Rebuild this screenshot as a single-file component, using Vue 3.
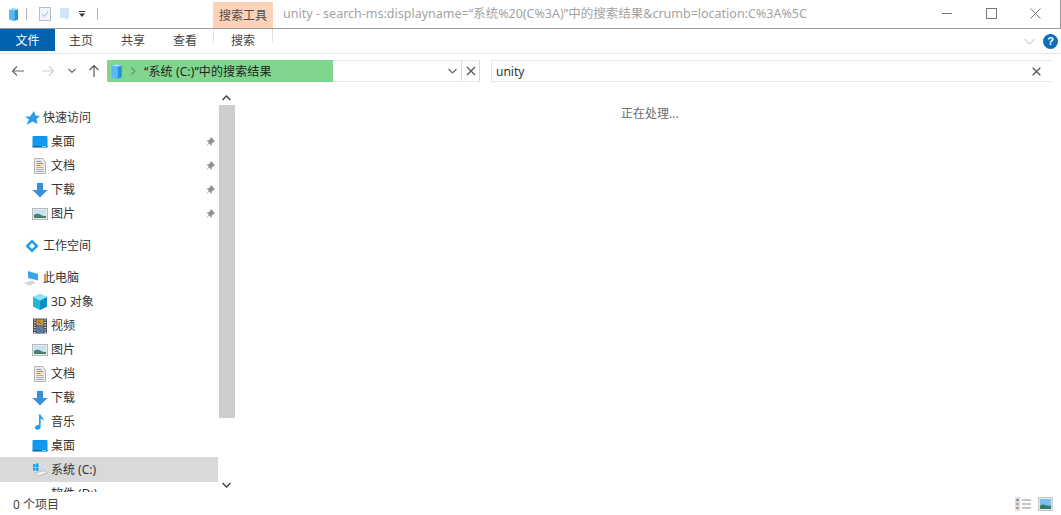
<script setup>
const quick = [
  { icon: 'desk', label: '桌面' },
  { icon: 'doc', label: '文档' },
  { icon: 'down', label: '下载' },
  { icon: 'pic', label: '图片' }
]
const pc = [
  { icon: 'cube3d', label: '3D 对象' },
  { icon: 'film', label: '视频' },
  { icon: 'pic', label: '图片' },
  { icon: 'doc', label: '文档' },
  { icon: 'down', label: '下载' },
  { icon: 'music', label: '音乐' },
  { icon: 'desk', label: '桌面' },
  { icon: 'drive', label: '系统 (C:)', selected: true },
  { icon: '', label: '软件 (D:)' }
]
const ribbonTabs = ['主页', '共享', '查看']
</script>

<template>
  <div class="window">
    <svg class="sprite" width="0" height="0">
      <defs>
        <symbol id="cube" viewBox="0 0 16 16">
          <path d="M2.500 2l5.500-2 5.500 2v12l-5.500 2-5.500-2z" fill="#56b8f4" />
          <path d="M9.500 2.500l4-.5v12l-4 1.600z" fill="#2a8fdb" />
          <path d="M2.500 2L8 0l5.500 2-4 .7z" fill="#a5dcfa" />
        </symbol>
        <symbol id="desk" viewBox="0 0 16 16">
          <rect x="0.500" y="2" width="15" height="11" rx="1" fill="#0f9af0" />
          <rect x="0.500" y="12" width="15" height="1.600" fill="#0a6fb5" />
          <rect x="10" y="12.200" width="4" height="1" fill="#b7e0f8" />
        </symbol>
        <symbol id="doc" viewBox="0 0 16 16">
          <path d="M2.500 .5h8l3 3v12h-11z" fill="#e9ebed" stroke="#b2b6b9" />
          <path d="M4.500 3.500h5M4.500 5.500h7M4.500 7.500h4" stroke="#4ea6e4" />
          <path d="M4.500 9.500h7M4.500 11.500h7M4.500 13.500h7" stroke="#a9adb0" />
        </symbol>
        <symbol id="down" viewBox="0 0 16 16">
          <path d="M5 1h6v7h4.500L8 15.500 .5 8H5z" fill="#3a8fdd" />
        </symbol>
        <symbol id="pic" viewBox="0 0 16 16">
          <rect x="0.500" y="2.500" width="15" height="11" fill="#e7e8e9" stroke="#b5b8ba" />
          <rect x="2" y="4" width="12" height="8" fill="#c5e3f6" />
          <path d="M2 9c3-2 5-1 7 0s3 1 5 1v2H2z" fill="#4a7f66" />
        </symbol>
        <symbol id="film" viewBox="0 0 16 16">
          <rect x="1" y="0.500" width="14" height="15" fill="#4d5258" />
          <path d="M2 2h1.500M2 4.500h1.500M2 7h1.500M2 9.500h1.500M2 12h1.500M2 14.500h1.500M12.500 2H14M12.500 4.500H14M12.500 7H14M12.500 9.500H14M12.500 12H14M12.500 14.500H14" stroke="#e8e8e8" />
          <rect x="4.500" y="1.500" width="7" height="6" fill="#c9913f" />
          <rect x="4.500" y="8.500" width="7" height="6" fill="#4f88c0" />
          <path d="M6 3l3 3M6 10l3 3" stroke="#8a3e2a" />
        </symbol>
        <symbol id="cube3d" viewBox="0 0 16 16">
          <path d="M8 0l7 3v9.500l-7 3.500-7-3.500V3z" fill="#25b7d8" />
          <path d="M8 6.500l7-3.500v9.500L8 16z" fill="#0d8fc5" />
          <path d="M1 3l7-3 7 3-7 3.500z" fill="#8ee4f2" />
        </symbol>
        <symbol id="music" viewBox="0 0 16 16">
          <path d="M7 0.500h1.600c.3 2.400 3.400 3.300 3.400 6.500-.8-1.500-2-2-3.400-2.300V12.800c0 1.700-1.400 3-3.300 3-1.300 0-2.300-.8-2.300-2 0-1.600 1.700-2.800 3.300-2.800.3 0 .5 0 .7.100z" fill="#15a1ee" />
        </symbol>
        <symbol id="pin" viewBox="0 0 10 10">
          <path d="M6 0l4 4-1.200.7-2 2-.3 2.300-2.200-2.400L1 9.500l2.900-3.900L1.500 3.600 3.700 3.200l1.700-1.700z" fill="#8d9296" />
        </symbol>
      </defs>
    </svg>

    <header class="titlebar">
      <div class="qat">
        <svg class="ico-13"><use href="#cube" /></svg>
        <span class="qat-sep"></span>
        <svg class="qat-check" viewBox="0 0 12 14" width="12" height="14">
          <rect x="0.500" y="0.500" width="11" height="13" fill="#f2f5f8" stroke="#b4bfd0" />
          <path d="M3 7l2.500 2.500L9 4.500" fill="none" stroke="#a8b5c5" />
        </svg>
        <svg class="qat-folder" viewBox="0 0 10 14" width="10" height="14">
          <path d="M0 1h9v10l-3 2-1-2H0z" fill="#d5e4f2" />
        </svg>
        <svg class="qat-drop" viewBox="0 0 7 7" width="7" height="7">
          <path d="M0 0h6v1H0zM0 2.500h6L3 6z" fill="#333" />
        </svg>
        <span class="qat-sep last"></span>
      </div>
      <div class="search-tools">搜索工具</div>
      <div class="title-text">unity - search-ms:displayname=“系统%20(C%3A)”中的搜索结果&amp;crumb=location:C%3A%5C</div>
      <div class="win-controls">
        <span class="win-btn"><svg width="11" height="11" viewBox="0 0 11 11"><path d="M0 5.500h10" stroke="#777" /></svg></span>
        <span class="win-btn"><svg width="11" height="11" viewBox="0 0 11 11"><rect x="0.500" y="0.500" width="10" height="10" fill="none" stroke="#777" /></svg></span>
        <span class="win-btn"><svg width="11" height="11" viewBox="0 0 11 11"><path d="M.5.500l10 10M10.500.500l-10 10" stroke="#777" /></svg></span>
      </div>
    </header>

    <nav class="ribbon">
      <div class="file-tab">文件</div>
      <div v-for="t in ribbonTabs" :key="t" class="rib-tab">{{ t }}</div>
      <div class="rib-tab active">搜索</div>
      <div class="rib-right">
        <svg width="11" height="7" viewBox="0 0 11 7"><path d="M.5 1l5 5 5-5" fill="none" stroke="#b5b5b5" /></svg>
        <span class="help">?</span>
      </div>
    </nav>

    <div class="addr-row">
      <div class="nav-btns">
        <svg class="nb" width="14" height="12" viewBox="0 0 14 12"><path d="M13 6H1.500M6 1.500L1.500 6 6 10.500" fill="none" stroke="#666" stroke-width="1.200" /></svg>
        <svg class="nb" width="14" height="12" viewBox="0 0 14 12"><path d="M1 6h11.500M8 1.500L12.500 6 8 10.500" fill="none" stroke="#d0d0d0" stroke-width="1.200" /></svg>
        <svg class="nb-chev" width="8" height="6" viewBox="0 0 8 6"><path d="M.5 1L4 4.500 7.500 1" fill="none" stroke="#666" stroke-width="1.200" /></svg>
        <svg class="nb-up" width="12" height="14" viewBox="0 0 12 14"><path d="M6 13V1.500M1.500 6L6 1.500 10.500 6" fill="none" stroke="#555" stroke-width="1.200" /></svg>
      </div>
      <div class="addr">
        <div class="addr-fill">
          <svg class="crumb-icon"><use href="#cube" /></svg>
          <svg class="crumb-arrow" width="5" height="8" viewBox="0 0 5 8"><path d="M.5.500L4 4 .5 7.500" fill="none" stroke="#6c8c70" stroke-width="1.200" /></svg>
          <span class="addr-text">“系统 (C:)”中的搜索结果</span>
        </div>
        <div class="addr-rest">
          <svg width="9" height="6" viewBox="0 0 9 6"><path d="M.5 1L4.500 5 8.500 1" fill="none" stroke="#666" stroke-width="1.200" /></svg>
        </div>
        <div class="addr-x">
          <svg width="10" height="10" viewBox="0 0 10 10"><path d="M1 1l8 8M9 1l-8 8" stroke="#555" stroke-width="1.300" /></svg>
        </div>
      </div>
      <div class="search-box">
        <span class="search-text">unity</span>
        <svg width="9" height="9" viewBox="0 0 9 9"><path d="M.7.700l7.600 7.600M8.300.700L.7 8.300" stroke="#555" stroke-width="1.300" /></svg>
      </div>
    </div>

    <main class="body">
      <aside class="tree">
        <div class="tree-list">
          <div class="row top first">
            <svg class="ic" viewBox="0 0 16 16"><path d="M10 1l1.500 4.500 4.500.5-3.500 3 1 5L8.500 11.500 2.500 15 5 9.500 1 6.500h5z" fill="#2e9bea" /></svg>
            <span>快速访问</span>
          </div>
          <div v-for="q in quick" :key="q.label + 'q'" class="row child">
            <svg class="ic"><use :href="'#' + q.icon" /></svg>
            <span class="grow">{{ q.label }}</span>
            <svg class="pin"><use href="#pin" /></svg>
          </div>
          <div class="row top gap">
            <svg class="ic" viewBox="0 0 16 16"><path d="M8 1.500L14.500 8 8 14.500 1.500 8zM8 5L5 8l3 3 3-3z" fill="#1d9be9" fill-rule="evenodd" /></svg>
            <span>工作空间</span>
          </div>
          <div class="row top gap">
            <svg class="ic" viewBox="0 0 16 16">
              <path d="M4 1l10 3v6.500L4 8z" fill="#3aa6e6" />
              <path d="M0 13l8-2.500 4 2.500-7 2.500z" fill="#d4d7d9" />
            </svg>
            <span>此电脑</span>
          </div>
          <div v-for="p in pc" :key="p.label + 'p'" class="row child" :class="{ selected: p.selected }">
            <svg v-if="p.icon === 'drive'" class="ic" viewBox="0 0 16 16">
              <path d="M1 2h2.500v3H1zM4 1.500h2.500v3.500H4zM1 5.500h2.500v3H1zM4 5.500h2.500V9H4z" fill="#12a5ee" />
              <path d="M3 11l9-2.500 3.500 2.500-9 3z" fill="#eef0f1" stroke="#9ea3a6" stroke-width=".6" />
            </svg>
            <svg v-else-if="p.icon" class="ic"><use :href="'#' + p.icon" /></svg>
            <span v-else class="ic"></span>
            <span class="grow">{{ p.label }}</span>
          </div>
        </div>
        <div class="scrollbar">
          <svg class="sb-arrow" width="9" height="6" viewBox="0 0 9 6"><path d="M.5 5L4.500 1l4 4" fill="none" stroke="#444" stroke-width="1.500" /></svg>
          <div class="thumb"></div>
          <svg class="sb-arrow bottom" width="9" height="6" viewBox="0 0 9 6"><path d="M.5 1L4.500 5l4-4" fill="none" stroke="#444" stroke-width="1.500" /></svg>
        </div>
      </aside>
      <section class="results">正在处理...</section>
    </main>

    <footer class="status">
      <span class="status-text">0 个项目</span>
      <div class="views">
        <svg width="16" height="14" viewBox="0 0 16 14">
          <rect x="0" y="0" width="5" height="14" fill="#dcdcdc" />
          <rect x="1.500" y="2" width="2" height="2" fill="#4a7fb5" />
          <rect x="1.500" y="6" width="2" height="2" fill="#8d9aa5" />
          <rect x="1.500" y="10" width="2" height="2" fill="#d5763f" />
          <path d="M7 3h9M7 7h9M7 11h9" stroke="#8c8c8c" />
        </svg>
        <svg width="15" height="14" viewBox="0 0 15 14">
          <rect x="0.500" y="0.500" width="14" height="13" fill="#e2e4e6" stroke="#c8c8c8" />
          <rect x="2" y="2" width="11" height="10" fill="#7cc0ec" />
          <path d="M2 9c3-3 5-1 7-.5s3 .5 4 0V12H2z" fill="#3f7a66" />
        </svg>
      </div>
    </footer>
  </div>
</template>

<style scoped>
.window {
  width: 1061px;
  height: 515px;
  display: flex;
  flex-direction: column;
  overflow: hidden;
  background: #fff;
  color: #333;
  font: 12px/16px "Noto Sans", "Noto Sans CJK SC", sans-serif;
}
.sprite { position: absolute; }
.ico-13 { width: 13px; height: 13px; flex: none; }
.crumb-icon { width: 15px; height: 15px; flex: none; margin-left: -1px; }

.titlebar {
  height: 29px;
  flex: none;
  box-sizing: border-box;
  display: flex;
  border-bottom: 1px solid #9a9a9a;
  border-right: 1px solid #9a9a9a;
}
.qat { width: 213px; flex: none; display: flex; align-items: center; padding-left: 7px; box-sizing: border-box; }
.qat-sep { width: 1px; height: 12px; background: #b4b4b4; margin-left: 6px; }
.qat-sep.last { margin-left: 11px; }
.qat-check { margin-left: 12px; }
.qat-folder { margin-left: 9px; }
.qat-drop { margin-left: 9px; }
.search-tools {
  width: 60px;
  margin-top: 2px;
  background: #fdd2b8;
  text-align: center;
  line-height: 28px;
  height: 26px;
  color: #4d4d4d;
}
.title-text { margin-left: 10px; line-height: 27px; color: #a3a3a3; font-size: 12.500px; white-space: nowrap; flex: 1; }
.win-controls { display: flex; margin-right: 1px; }
.win-btn { width: 44px; height: 26px; display: flex; align-items: center; justify-content: center; }
.win-btn:last-child { margin-right: 2px; }

.ribbon {
  height: 25px;
  flex: none;
  box-sizing: border-box;
  display: flex;
  border-bottom: 1px solid #e6e6e6;
}
.file-tab { width: 55px; height: 22px; background: #0063b1; color: #fff; text-align: center; line-height: 23px; }
.rib-tab { width: 52px; text-align: center; line-height: 24px; color: #444; }
.rib-tab:first-of-type { width: 52px; }
.rib-tab.active { margin-left: 2px; width: 60px; border-left: 1px solid #e2e2e2; border-right: 1px solid #e2e2e2; height: 14px; box-sizing: border-box; overflow: visible; }
.rib-right { margin-left: auto; display: flex; align-items: center; gap: 8px; padding-right: 3px; }
.help { width: 15px; height: 15px; border-radius: 50%; background: #0a6fc2; color: #fff; font: bold 11px/15px "Liberation Sans", sans-serif; text-align: center; }

.addr-row {
  height: 22px;
  flex: none;
  margin-top: 6px;
  display: flex;
  padding-right: 9px;
}
.nav-btns { width: 107px; flex: none; display: flex; align-items: center; padding-left: 11px; box-sizing: border-box; }
.nb + .nb { margin-left: 16px; }
.nb-chev { margin-left: 13px; }
.nb-up { margin-left: 12px; }
.addr { width: 373px; flex: none; display: flex; box-sizing: border-box; border-top: 1px solid #e6e6e6; border-bottom: 1px solid #e6e6e6; border-right: 1px solid #d9d9d9; }
.addr-fill { width: 226px; flex: none; margin: -1px 0; background: #80d68f; display: flex; align-items: center; padding-left: 3px; box-sizing: border-box; color: #222; }
.crumb-arrow { margin-left: 7px; }
.addr-text { margin-left: 8px; padding-top: 2px; white-space: nowrap; letter-spacing: .12px; }
.addr-rest { flex: 1; display: flex; align-items: center; justify-content: flex-end; padding-right: 4px; border-right: 1px solid #d9d9d9; }
.addr-x { width: 17px; flex: none; display: flex; align-items: center; justify-content: center; }
.search-box { flex: 1; margin-left: 11px; display: flex; align-items: center; justify-content: space-between; padding: 0 11px 0 4px; box-sizing: border-box; border: 1px solid #e6e6e6; border-right: 0; }
.search-text { font-size: 12px; color: #333; padding-top: 2px; }

.body { flex: 1; min-height: 0; display: flex; padding-top: 8px; }
.tree { width: 235px; flex: none; display: flex; height: 402px; overflow: hidden; }
.tree-list { width: 218px; flex: none; height: 402px; overflow: hidden; padding-top: 16px; box-sizing: border-box; }
.row { height: 24px; display: flex; align-items: center; color: #333; white-space: nowrap; }
.row.top { padding-left: 24px; }
.row.top .ic { margin-right: 3px; }
.row.child { padding-left: 32px; }
.row.child .ic { margin-right: 3px; }
.row.gap { margin-top: 8px; }
.row.selected { background: #d9d9d9; height: 25px; margin-top: -1px; padding-top: 1px; box-sizing: border-box; }
.ic { width: 16px; height: 16px; flex: none; display: block; }
.grow { flex: 1; }
.pin { width: 10px; height: 10px; margin-right: 3px; flex: none; }
.scrollbar { width: 17px; flex: none; position: relative; display: flex; flex-direction: column; align-items: center; }
.sb-arrow { flex: none; margin-top: 5px; }
.thumb { width: 16px; height: 313px; margin-top: 4px; background: #cdcdcd; flex: none; }
.sb-arrow.bottom { margin-top: 64px; }
.results { flex: 1; color: #6d6d6d; padding-top: 16px; padding-left: 386px; box-sizing: border-box; }

.status { height: 23px; flex: none; margin-top: auto; display: flex; align-items: center; justify-content: space-between; padding: 0 8px 0 13px; color: #444; }
.status-text { padding-top: 2px; }
.views { display: flex; gap: 7px; align-items: center; }
</style>

<style>
body { margin: 0; }
</style>
